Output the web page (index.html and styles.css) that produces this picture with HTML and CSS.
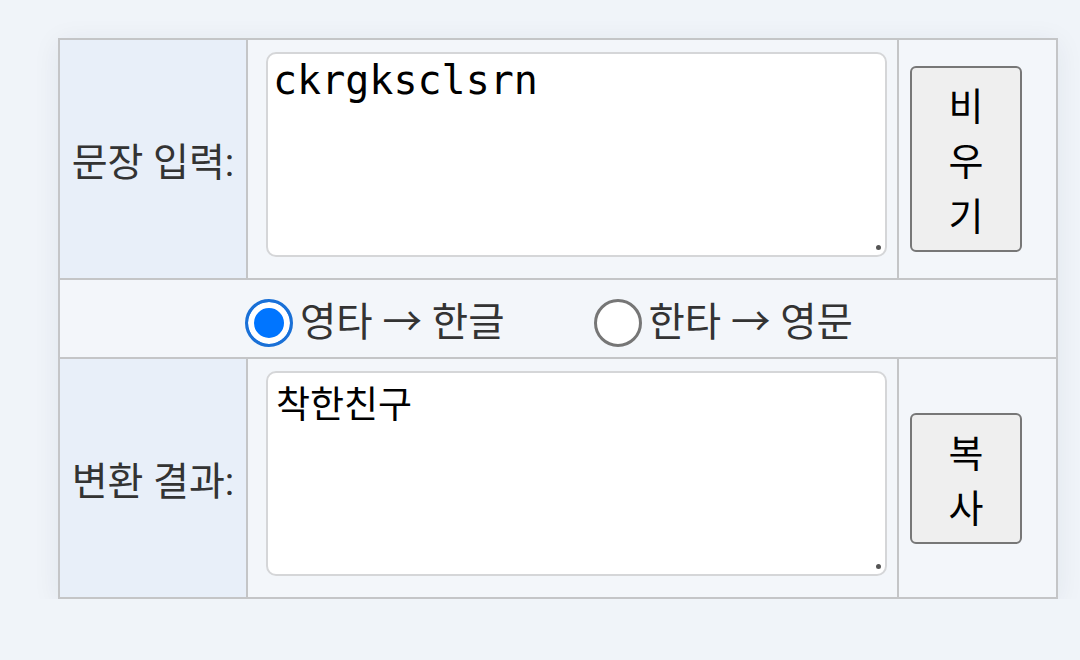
FILE: index.html
```html
<!DOCTYPE html>
<html lang="ko">
<head>
<meta charset="utf-8">
<title>한영 변환기</title>
<link rel="stylesheet" href="styles.css">
</head>
<body>
<div class="wrap">
  <table class="conv">
    <tr>
      <th class="lbl">문장 입력:</th>
      <td class="field"><div class="ta"><textarea class="box">ckrgksclsrn</textarea></div></td>
      <td class="act"><button class="btn" type="button">비우기</button></td>
    </tr>
    <tr>
      <td class="modes" colspan="3">
        <div class="modes-in">
          <label class="mode"><input type="radio" name="mode" checked><span>영타 → 한글</span></label>
          <label class="mode"><input type="radio" name="mode"><span>한타 → 영문</span></label>
        </div>
      </td>
    </tr>
    <tr>
      <th class="lbl">변환 결과:</th>
      <td class="field"><div class="ta"><textarea class="box out">착한친구</textarea></div></td>
      <td class="act"><button class="btn" type="button">복사</button></td>
    </tr>
  </table>
</div>
</body>
</html>
```
FILE: styles.css
```css
html, body {
  margin: 0;
}
body {
  background: #f0f4f9;
  font-family: Roboto, "Noto Sans CJK KR", sans-serif;
  color: #333;
}
.wrap {
  padding: 38px 0 0 58px;
}
.conv {
  border-collapse: separate;
  border-spacing: 0;
  border-top: 2px solid #c4c5c7;
  border-left: 2px solid #c4c5c7;
  box-shadow: 0 4px 26px rgba(30, 45, 70, 0.07);
  table-layout: fixed;
  width: 1000px;
}
.conv th,
.conv td {
  border-right: 2px solid #c4c5c7;
  border-bottom: 2px solid #c4c5c7;
  padding: 0;
  background: #f3f6fa;
  vertical-align: middle;
  box-sizing: border-box;
}
.conv .lbl {
  width: 188px;
  background: #e8eff9;
  font-weight: 400;
  font-size: 39px;
  text-align: center;
  color: #333;
}
.conv .field {
  padding: 12px 10px 21px 18px;
}
.conv .act {
  width: 159px;
  padding: 0 0 0 11px;
  text-align: left;
}
.ta {
  position: relative;
}
.ta::after {
  content: "";
  position: absolute;
  right: 6px;
  bottom: 7px;
  width: 5px;
  height: 5px;
  border-radius: 50%;
  background: #555;
}
.box {
  display: block;
  box-sizing: border-box;
  width: 100%;
  height: 205px;
  margin: 0;
  padding: 3px 5px;
  border: 2px solid #d5d6d8;
  border-radius: 10px;
  background: #fff;
  color: #000;
  font-family: "DejaVu Sans Mono", "Noto Sans CJK KR", monospace;
  font-size: 40px;
  resize: none;
  outline: none;
}
.box.out {
  font-family: "Noto Sans CJK KR", sans-serif;
  font-size: 37px;
  padding: 2px 5px 0 8px;
}
.btn {
  box-sizing: border-box;
  width: 112px;
  margin: 0;
  padding: 8px 30px 9px;
  border: 2px solid #777;
  border-radius: 6px;
  background: #efefef;
  color: #000;
  font-family: "Noto Sans CJK KR", sans-serif;
  font-size: 38px;
  line-height: normal;
  text-align: center;
}
.modes-in {
  display: flex;
  align-items: center;
  justify-content: center;
  gap: 89px;
  height: 77px;
  padding-right: 18px;
}
.mode {
  display: flex;
  align-items: center;
  gap: 7px;
  font-size: 39.5px;
  color: #333;
}
.mode input {
  appearance: none;
  -webkit-appearance: none;
  box-sizing: border-box;
  width: 48px;
  height: 48px;
  margin: 8px 0 0 0;
  border: 3px solid #767676;
  border-radius: 50%;
  background: #fff;
}
.mode input:checked {
  border-color: #1a70d6;
  background: #0075ff;
  box-shadow: inset 0 0 0 6px #fff;
}
```
